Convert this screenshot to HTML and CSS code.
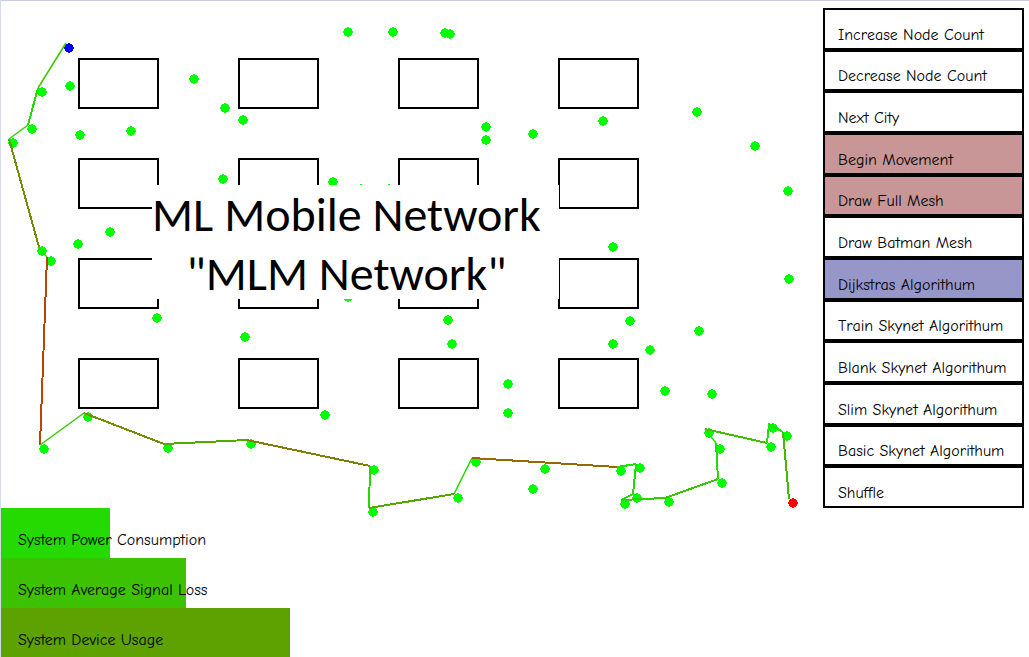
FILE: index.html
```html
<!DOCTYPE html>
<html lang="en">
<head>
<meta charset="utf-8">
<title>ML Mobile Network</title>
<link rel="stylesheet" href="styles.css">
</head>
<body>
<main class="app">
  <div class="top">
    <section class="stage">
      <svg class="map" viewBox="1 1 822 507" role="img" aria-label="City map with network nodes">
        <defs>
          <path id="n" d="M-1-5h2v1h2v1h1v2h1v2h-1v2h-1v1h-2v1h-2v-1h-2v-1h-1v-2h-1v-2h1v-2h1v-1h2z"/>
          <g id="row">
            <rect x="79" width="79" height="49"/><rect x="239" width="79" height="49"/>
            <rect x="399" width="79" height="49"/><rect x="559" width="79" height="49"/>
          </g>
        </defs>
        <g class="blocks">
          <use href="#row" y="59"/><use href="#row" y="159"/><use href="#row" y="259"/><use href="#row" y="359"/>
        </g>
        <g class="nodes">
          <use href="#n" x="42" y="92"/><use href="#n" x="70" y="86"/><use href="#n" x="194" y="79"/>
          <use href="#n" x="225" y="108"/><use href="#n" x="243" y="120"/><use href="#n" x="32" y="129"/>
          <use href="#n" x="13" y="143"/><use href="#n" x="80" y="135"/><use href="#n" x="131" y="131"/>
          <use href="#n" x="223" y="179"/><use href="#n" x="42" y="251"/><use href="#n" x="51" y="261"/>
          <use href="#n" x="78" y="244"/><use href="#n" x="110" y="232"/><use href="#n" x="157" y="318"/>
          <use href="#n" x="245" y="337"/><use href="#n" x="44" y="449"/><use href="#n" x="88" y="417"/>
          <use href="#n" x="168" y="448"/><use href="#n" x="251" y="444"/><use href="#n" x="348" y="32"/>
          <use href="#n" x="393" y="32"/><use href="#n" x="445" y="33"/><use href="#n" x="450" y="34"/>
          <use href="#n" x="486" y="127"/><use href="#n" x="486" y="140"/><use href="#n" x="533" y="134"/>
          <use href="#n" x="333" y="182"/><use href="#n" x="361" y="189"/><use href="#n" x="389" y="189"/>
          <use href="#n" x="348" y="297"/><use href="#n" x="325" y="415"/><use href="#n" x="448" y="320"/>
          <use href="#n" x="452" y="344"/><use href="#n" x="508" y="384"/><use href="#n" x="508" y="413"/>
          <use href="#n" x="374" y="470"/><use href="#n" x="373" y="512"/><use href="#n" x="458" y="498"/>
          <use href="#n" x="476" y="462"/><use href="#n" x="545" y="469"/><use href="#n" x="533" y="489"/>
          <use href="#n" x="621" y="471"/><use href="#n" x="640" y="468"/><use href="#n" x="625" y="504"/>
          <use href="#n" x="637" y="498"/><use href="#n" x="669" y="502"/><use href="#n" x="709" y="433"/>
          <use href="#n" x="720" y="449"/><use href="#n" x="722" y="483"/><use href="#n" x="773" y="428"/>
          <use href="#n" x="771" y="447"/><use href="#n" x="787" y="436"/><use href="#n" x="613" y="247"/>
          <use href="#n" x="630" y="321"/><use href="#n" x="613" y="344"/><use href="#n" x="650" y="350"/>
          <use href="#n" x="699" y="331"/><use href="#n" x="789" y="279"/><use href="#n" x="665" y="391"/>
          <use href="#n" x="712" y="394"/><use href="#n" x="603" y="121"/><use href="#n" x="697" y="112"/>
          <use href="#n" x="755" y="146"/><use href="#n" x="788" y="191"/>
          <use href="#n" class="source" x="69" y="48"/><use href="#n" class="target" x="793" y="503"/>
        </g>
        <g class="route">
          <path class="thin" stroke="#38c700" d="M66 43L38 88"/>
          <path stroke="#25da00" d="M38 88L28 125"/>
          <path class="thin" stroke="#2ed100" d="M28 125L9 139"/>
          <path stroke="#728d00" d="M9 139L39 247"/>
          <path class="thin" stroke="#1de200" d="M38 247L47 257"/>
          <path stroke="#b94600" d="M47 257L40 445"/>
          <path class="thin" stroke="#38c700" d="M40 445L84 413"/>
          <path stroke="#728d00" d="M84 413L164 444"/>
          <path stroke="#55aa00" d="M164 444L247 440"/>
          <path stroke="#807f00" d="M247 440L370 466"/>
          <path stroke="#2ad500" d="M370 466L369 508"/>
          <path stroke="#58a700" d="M369 508L454 494"/>
          <path class="thin" stroke="#2ad500" d="M454 494L472 458"/>
          <path stroke="#956a00" d="M472 458L617 467"/>
          <path stroke="#1de200" d="M617 467L636 464"/>
          <path stroke="#20df00" d="M636 464L633 494L621 500"/>
          <path stroke="#2ed100" d="M621 500L665 498"/>
          <path stroke="#3bc400" d="M665 498L718 479"/>
          <path stroke="#25da00" d="M718 479L716 443"/>
          <path class="thin" stroke="#1de200" d="M716 443L705 429"/>
          <path stroke="#42bd00" d="M705 429L767 443"/>
          <path stroke="#1de200" d="M767 443L769 424L783 432"/>
          <path stroke="#45ba00" d="M783 432L789 499"/>
        </g>
      </svg>
      <h1 class="title">ML Mobile Network<br>"MLM Network"</h1>
    </section>
    <nav class="menu" aria-label="Simulation controls">
      <button type="button">Increase Node Count</button>
      <button type="button">Decrease Node Count</button>
      <button type="button">Next City</button>
      <button type="button" class="off">Begin Movement</button>
      <button type="button" class="off">Draw Full Mesh</button>
      <button type="button">Draw Batman Mesh</button>
      <button type="button" class="active">Dijkstras Algorithum</button>
      <button type="button">Train Skynet Algorithum</button>
      <button type="button">Blank Skynet Algorithum</button>
      <button type="button">Slim Skynet Algorithum</button>
      <button type="button">Basic Skynet Algorithum</button>
      <button type="button">Shuffle</button>
    </nav>
  </div>
  <section class="metrics">
    <div class="metric power">System Power Consumption</div>
    <div class="metric loss">System Average Signal Loss</div>
    <div class="metric usage">System Device Usage</div>
  </section>
</main>
</body>
</html>
```
FILE: styles.css
```css
* { box-sizing: border-box; }

body {
  margin: 0;
  background: #fff;
  color: #000;
  font: 16px/20px "Comic Sans MS", "Comic Neue", Lato, sans-serif;
}

.app {
  height: 100vh;
  overflow: hidden;
  border-top: 1px solid #c5cee2;
  border-left: 1px solid #d2dbeb;
}

.top {
  display: grid;
  grid-template-columns: 1fr 201px;
  padding-right: 5px;
}

.stage { position: relative; }

.map {
  display: block;
  width: 100%;
  height: auto;
  overflow: visible;
  shape-rendering: crispEdges;
}

.blocks { fill: none; stroke: #000; stroke-width: 2px; }
.nodes { fill: #0f0; }
.source { fill: #00f; }
.target { fill: #f00; }
.route { fill: none; stroke-width: 2px; }
.thin { stroke-width: 1.5px; shape-rendering: auto; }

.title {
  position: absolute;
  top: 184px;
  left: 151px;
  width: 407px;
  height: 114px;
  margin: 0;
  padding-right: 18px;
  background: #fff;
  font: 400 48px/59px Calibri, Carlito, Lato, sans-serif;
  text-align: center;
  white-space: nowrap;
}

.menu {
  display: grid;
  grid-auto-rows: 1fr;
  height: 500px;
  margin-top: 7px;
}

.menu button {
  padding: 12px 0 0 13px;
  border: 2px solid #000;
  border-radius: 0;
  background: #fff;
  color: inherit;
  font: inherit;
  text-align: left;
  white-space: nowrap;
}

.menu .off { background: #c89696; }
.menu .active { background: #9696c8; }

.metric {
  height: 50px;
  padding: 22px 0 0 17px;
  white-space: nowrap;
}

.power { width: 109px; background: #25da00; }
.loss { width: 185px; background: #3dc200; }
.usage { width: 289px; background: #5da200; }
```
